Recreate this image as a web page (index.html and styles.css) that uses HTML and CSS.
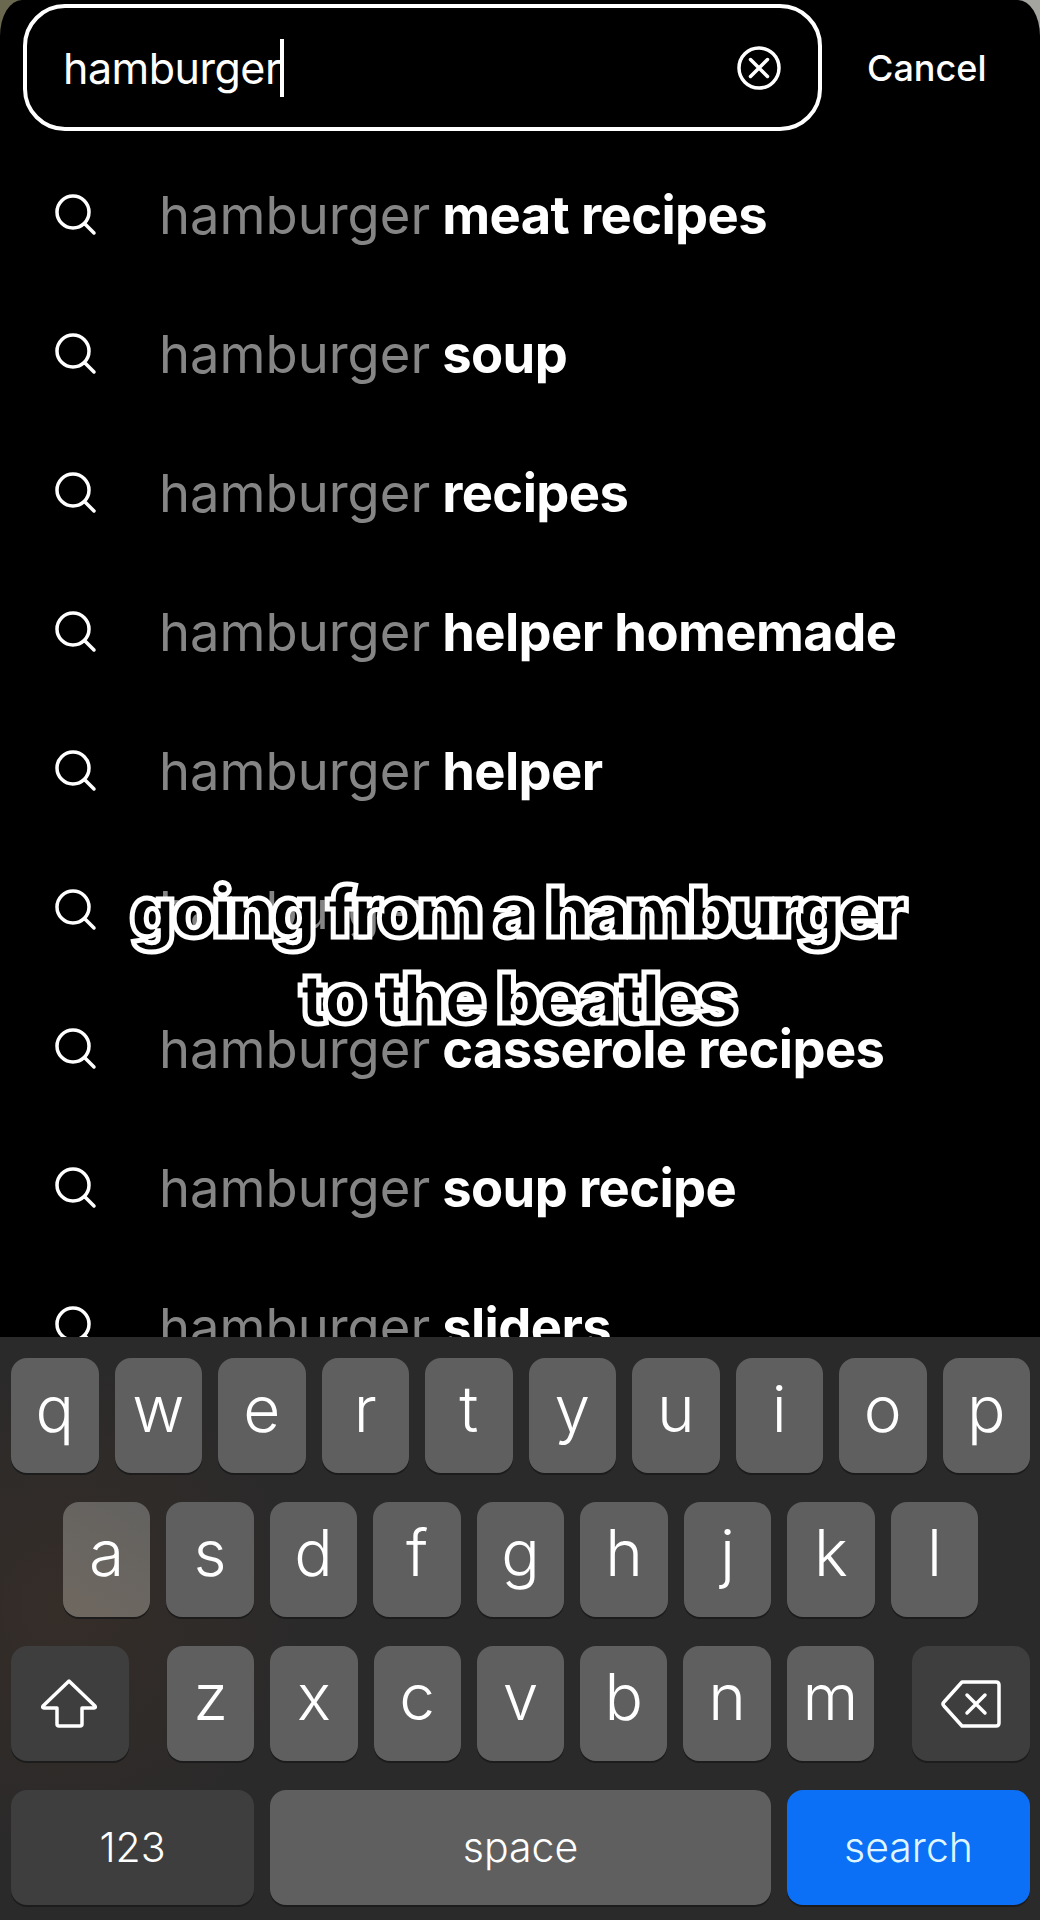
FILE: index.html
```html
<!DOCTYPE html>
<html lang="en">

<head>
    <meta charset="UTF-8">
    <title>Search</title>
    <link rel="stylesheet" href="styles.css">
</head>

<body>
    <div class="screen">
        <div class="sheet">
            <div class="search-row">
                <div class="search-box">
                    <span class="query">hamburger</span><span class="caret"></span>
                    <svg class="clear-icon" viewBox="0 0 46 46" fill="none" stroke="#fff" stroke-width="3.5">
                        <circle cx="23" cy="23" r="20"></circle>
                        <path d="M14.5 14.5 L31.5 31.5 M31.5 14.5 L14.5 31.5" stroke-linecap="round"></path>
                    </svg>
                </div>
                <span class="cancel">Cancel</span>
            </div>

            <div class="suggestions">
                <div class="suggestion">
                    <svg class="search-icon" viewBox="0 0 44 44" fill="none" stroke="#fff" stroke-width="3.5" stroke-linecap="round">
                        <circle cx="20" cy="20" r="16"></circle>
                        <path d="M32 32 L41 41"></path>
                    </svg>
                    <span class="typed">hamburger</span> <b>meat recipes</b>
                </div>
                <div class="suggestion">
                    <svg class="search-icon" viewBox="0 0 44 44" fill="none" stroke="#fff" stroke-width="3.5" stroke-linecap="round">
                        <circle cx="20" cy="20" r="16"></circle>
                        <path d="M32 32 L41 41"></path>
                    </svg>
                    <span class="typed">hamburger</span> <b>soup</b>
                </div>
                <div class="suggestion">
                    <svg class="search-icon" viewBox="0 0 44 44" fill="none" stroke="#fff" stroke-width="3.5" stroke-linecap="round">
                        <circle cx="20" cy="20" r="16"></circle>
                        <path d="M32 32 L41 41"></path>
                    </svg>
                    <span class="typed">hamburger</span> <b>recipes</b>
                </div>
                <div class="suggestion">
                    <svg class="search-icon" viewBox="0 0 44 44" fill="none" stroke="#fff" stroke-width="3.5" stroke-linecap="round">
                        <circle cx="20" cy="20" r="16"></circle>
                        <path d="M32 32 L41 41"></path>
                    </svg>
                    <span class="typed">hamburger</span> <b>helper homemade</b>
                </div>
                <div class="suggestion">
                    <svg class="search-icon" viewBox="0 0 44 44" fill="none" stroke="#fff" stroke-width="3.5" stroke-linecap="round">
                        <circle cx="20" cy="20" r="16"></circle>
                        <path d="M32 32 L41 41"></path>
                    </svg>
                    <span class="typed">hamburger</span> <b>helper</b>
                </div>
                <div class="suggestion">
                    <svg class="search-icon" viewBox="0 0 44 44" fill="none" stroke="#fff" stroke-width="3.5" stroke-linecap="round">
                        <circle cx="20" cy="20" r="16"></circle>
                        <path d="M32 32 L41 41"></path>
                    </svg>
                    <span class="typed">hamburger</span>
                </div>
                <div class="suggestion">
                    <svg class="search-icon" viewBox="0 0 44 44" fill="none" stroke="#fff" stroke-width="3.5" stroke-linecap="round">
                        <circle cx="20" cy="20" r="16"></circle>
                        <path d="M32 32 L41 41"></path>
                    </svg>
                    <span class="typed">hamburger</span> <b>casserole recipes</b>
                </div>
                <div class="suggestion">
                    <svg class="search-icon" viewBox="0 0 44 44" fill="none" stroke="#fff" stroke-width="3.5" stroke-linecap="round">
                        <circle cx="20" cy="20" r="16"></circle>
                        <path d="M32 32 L41 41"></path>
                    </svg>
                    <span class="typed">hamburger</span> <b>soup recipe</b>
                </div>
                <div class="suggestion">
                    <svg class="search-icon" viewBox="0 0 44 44" fill="none" stroke="#fff" stroke-width="3.5" stroke-linecap="round">
                        <circle cx="20" cy="20" r="16"></circle>
                        <path d="M32 32 L41 41"></path>
                    </svg>
                    <span class="typed">hamburger</span> <b>sliders</b>
                </div>
            </div>

            <div class="keyboard">
                <div class="key-row">
                    <div class="key">q</div>
                    <div class="key">w</div>
                    <div class="key">e</div>
                    <div class="key">r</div>
                    <div class="key">t</div>
                    <div class="key">y</div>
                    <div class="key">u</div>
                    <div class="key">i</div>
                    <div class="key">o</div>
                    <div class="key">p</div>
                </div>
                <div class="key-row center">
                    <div class="key warm">a</div>
                    <div class="key">s</div>
                    <div class="key">d</div>
                    <div class="key">f</div>
                    <div class="key">g</div>
                    <div class="key">h</div>
                    <div class="key">j</div>
                    <div class="key">k</div>
                    <div class="key">l</div>
                </div>
                <div class="key-row">
                    <div class="key dark side shift-key">
                        <svg class="key-icon" viewBox="0 0 60 50" fill="none" stroke="#fff" stroke-width="3.5" stroke-linejoin="round">
                            <path d="M29 2 L3 27 Q2 29 4 29 L17 29 V45 Q17 47 19 47 H40 Q42 47 42 45 V29 H54 Q56 29 55 27 Z"></path>
                        </svg>
                    </div>
                    <div class="key">z</div>
                    <div class="key">x</div>
                    <div class="key">c</div>
                    <div class="key">v</div>
                    <div class="key">b</div>
                    <div class="key">n</div>
                    <div class="key">m</div>
                    <div class="key dark side back-key">
                        <svg class="key-icon" viewBox="0 0 60 50" fill="none" stroke="#fff" stroke-width="3.5" stroke-linejoin="round" stroke-linecap="round">
                            <path d="M21 3 H55 Q58 3 58 6 V44 Q58 47 55 47 H21 L3 27 Q1 25 3 23 Z"></path>
                            <path d="M26 16 L44 34 M44 16 L26 34"></path>
                        </svg>
                    </div>
                </div>
                <div class="key-row bottom-row">
                    <div class="key dark label">123</div>
                    <div class="key label">space</div>
                    <div class="key search-key label">search</div>
                </div>
            </div>
        </div>

        <div class="caption">going from a hamburger<br>to the beatles</div>
    </div>
</body>

</html>
```

FILE: styles.css
```css
body {
    margin: 0;
    font-family: Inter, "Liberation Sans", sans-serif;
    background-color: #000;
    color: #fff;
}

.screen {
    position: relative;
    width: 1040px;
    height: 1920px;
    overflow: hidden;
    background: linear-gradient(90deg, #6b6850 0%, #6b6850 40%, #a5a5a0 60%, #a5a5a0 100%);
}

.sheet {
    display: flex;
    flex-direction: column;
    height: 100%;
    background-color: #000;
    border-radius: 22px 22px 0 0 / 36px 36px 0 0;
}

.search-row {
    display: flex;
    align-items: center;
    margin-top: 4px;
    padding-left: 23px;
}

.search-box {
    display: flex;
    align-items: center;
    box-sizing: border-box;
    width: 799px;
    height: 127px;
    padding: 0 36px 0 36px;
    border: 4px solid #fff;
    border-radius: 42px;
}

.query {
    font-size: 43px;
    font-weight: 400;
    letter-spacing: -0.5px;
}

.caret {
    width: 4px;
    height: 58px;
    margin-left: -1px;
    background-color: #fff;
}

.clear-icon {
    width: 46px;
    height: 46px;
    margin-left: auto;
}

.cancel {
    margin-left: 45px;
    font-size: 36px;
    font-weight: 500;
}

.suggestions {
    flex: 1;
    overflow: hidden;
    padding-top: 16px;
}

.suggestion {
    display: flex;
    align-items: center;
    box-sizing: border-box;
    height: 139px;
    padding-left: 53px;
    padding-bottom: 3px;
    font-size: 52.5px;
    letter-spacing: -0.6px;
    white-space: pre;
}

.search-icon {
    flex: none;
    width: 44px;
    height: 44px;
    margin-right: 62px;
    margin-bottom: 2px;
}

.typed {
    color: #858585;
    margin-right: 12px;
    letter-spacing: 0;
}

.suggestion b {
    font-weight: 700;
}

.keyboard {
    display: flex;
    flex-direction: column;
    gap: 29px;
    height: 583px;
    box-sizing: border-box;
    padding: 21px 10px 0 11px;
    background: radial-gradient(circle at 60px 270px, #352d28 0, #2b2a2a 240px), #2a2a2a;
}

.key-row {
    display: flex;
    gap: 16px;
    height: 115px;
}

.key-row.center {
    justify-content: center;
}

.key {
    display: flex;
    align-items: center;
    justify-content: center;
    box-sizing: border-box;
    width: 87.5px;
    padding-bottom: 14px;
    font-size: 64px;
    font-weight: 350;
    background-color: #5f5f5f;
    border-radius: 16px;
    box-shadow: 0 2px 0 #1c1c1c;
}

.key.warm {
    background: linear-gradient(30deg, #6f6860 0%, #636260 100%);
}

.key.dark {
    background-color: #3e3e3e;
}

.key.side {
    flex: none;
    width: 118px;
    padding-bottom: 0;
}

.shift-key {
    margin-right: 22px;
}

.back-key {
    margin-left: 22px;
}

.key-icon {
    width: 60px;
    height: 50px;
}

.bottom-row .key {
    width: 243px;
    flex: none;
}

.bottom-row .key:nth-child(2) {
    flex: 1;
}

.key.label {
    padding-bottom: 2px;
    font-size: 41px;
    font-weight: 350;
}

.key.search-key {
    color: #dff6ff;
    background-color: #0b70f6;
}

.caption {
    position: absolute;
    top: 869px;
    left: -3px;
    width: 1040px;
    font-size: 70px;
    font-weight: 900;
    line-height: 86px;
    letter-spacing: -3.5px;
    word-spacing: 3px;
    text-align: center;
    color: #000;
    -webkit-text-stroke: 5px #fff;
}
```
